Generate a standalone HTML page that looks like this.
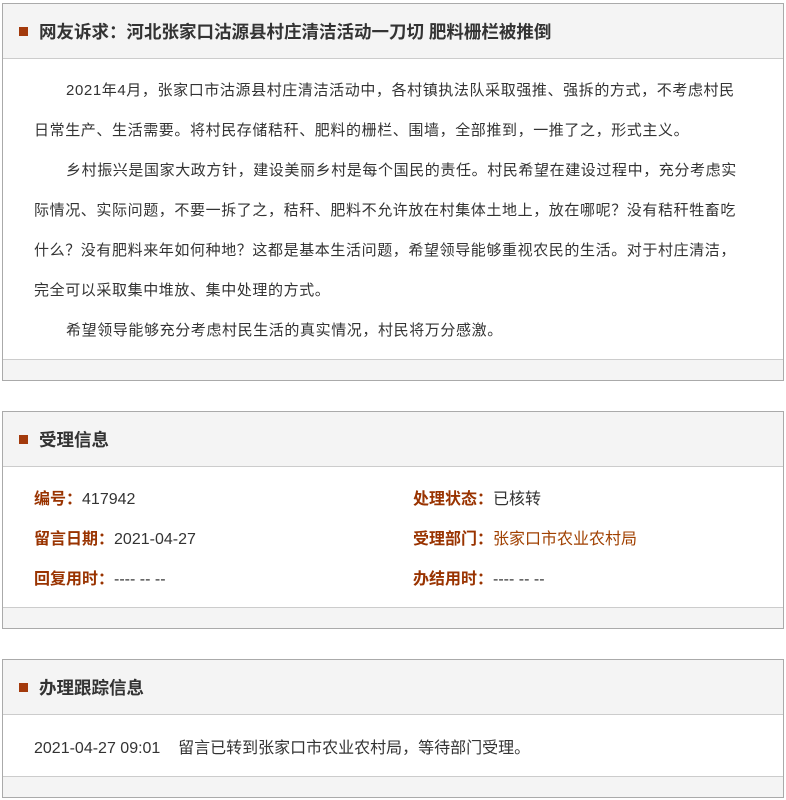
<!DOCTYPE html>
<html><head><meta charset="utf-8"><style>
body{margin:0;background:#fff;font-family:"Liberation Sans","Noto Sans CJK SC",sans-serif;color:#333;}
.p{position:absolute;left:2px;width:780px;border:1px solid #aaa;background:#fff;}
.h{height:54px;background:#f4f4f4;border-bottom:1px solid #ccc;position:relative;}
.h i{position:absolute;left:16px;top:23px;width:9px;height:9px;background:#a33a0c;}
.h b{position:absolute;left:36px;top:17px;font-size:17.5px;line-height:22px;color:#333;}
.f{height:20px;background:#f4f4f4;border-top:1px solid #ccc;}
.l{white-space:nowrap;font-size:15px;letter-spacing:0.6px;line-height:40px;padding-left:31px;}
.in{padding-left:63px;}
.r{position:absolute;font-size:16px;white-space:nowrap;}
.r b{color:#993300;}
</style></head><body>
<div class="p" style="top:3px;height:376px">
 <div class="h"><i></i><b>网友诉求：河北张家口沽源县村庄清洁活动一刀切 肥料栅栏被推倒</b></div>
 <div style="height:300px;padding-top:12px">
  <div class="l in">2021年4月，张家口市沽源县村庄清洁活动中，各村镇执法队采取强推、强拆的方式，不考虑村民</div>
  <div class="l">日常生产、生活需要。将村民存储秸秆、肥料的栅栏、围墙，全部推到，一推了之，形式主义。</div>
  <div class="l in">乡村振兴是国家大政方针，建设美丽乡村是每个国民的责任。村民希望在建设过程中，充分考虑实</div>
  <div class="l">际情况、实际问题，不要一拆了之，秸秆、肥料不允许放在村集体土地上，放在哪呢？没有秸秆牲畜吃</div>
  <div class="l">什么？没有肥料来年如何种地？这都是基本生活问题，希望领导能够重视农民的生活。对于村庄清洁，</div>
  <div class="l">完全可以采取集中堆放、集中处理的方式。</div>
  <div class="l in">希望领导能够充分考虑村民生活的真实情况，村民将万分感激。</div>
 </div>
 <div class="f" style="position:absolute;bottom:0;left:0;right:0"></div>
</div>
<div class="p" style="top:411px;height:216px">
 <div class="h"><i></i><b>受理信息</b></div>
 <div class="r" style="left:31px;top:73px"><b>编号：</b>417942</div>
 <div class="r" style="left:410px;top:73px"><b>处理状态：</b>已核转</div>
 <div class="r" style="left:31px;top:113px"><b>留言日期：</b>2021-04-27</div>
 <div class="r" style="left:410px;top:113px"><b>受理部门：</b><span style="color:#a04000">张家口市农业农村局</span></div>
 <div class="r" style="left:31px;top:153px"><b>回复用时：</b>---- -- --</div>
 <div class="r" style="left:410px;top:153px"><b>办结用时：</b>---- -- --</div>
 <div class="f" style="position:absolute;bottom:0;left:0;right:0"></div>
</div>
<div class="p" style="top:659px;height:137px">
 <div class="h"><i></i><b>办理跟踪信息</b></div>
 <div class="r" style="left:31px;top:74px">2021-04-27 09:01&nbsp;&nbsp;&nbsp; 留言已转到张家口市农业农村局，等待部门受理。</div>
 <div class="f" style="position:absolute;bottom:0;left:0;right:0"></div>
</div>
</body></html>
